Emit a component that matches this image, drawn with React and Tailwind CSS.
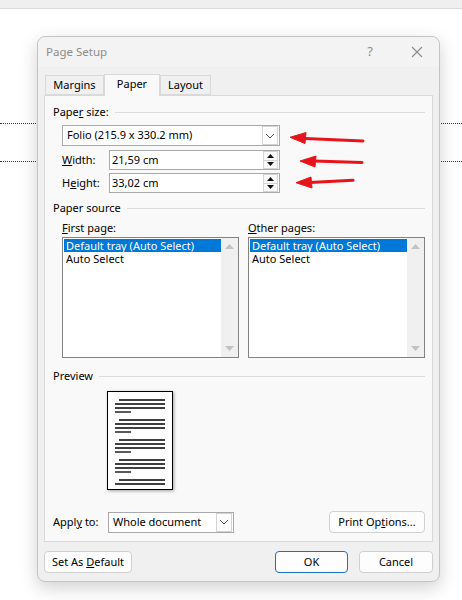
import React from 'react';

function SectionHeader({ children }) {
  return (
    <div className="flex h-[14px] items-center gap-[6px]">
      <span className="whitespace-nowrap">{children}</span>
      <div className="h-px flex-1 bg-[#dcdcdc]" />
    </div>
  );
}

function Chevron() {
  return (
    <svg width="10" height="6" viewBox="0 0 10 6">
      <path d="M1 1 L5 5 L9 1" fill="none" stroke="#555" strokeWidth="1" />
    </svg>
  );
}

function Dropdown({ value, width }) {
  return (
    <div className={`flex h-[21px] items-center border border-[#a9a9a9] bg-white ${width}`}>
      <span className="flex-1 truncate pl-[4px]">{value}</span>
      <div className="m-px flex h-[19px] w-[16px] items-center justify-center border border-[#d4d4d4] bg-white">
        <Chevron />
      </div>
    </div>
  );
}

function Spinner({ value }) {
  return (
    <div className="flex h-[20px] w-[171px] items-center border border-[#a9a9a9] bg-white">
      <span className="flex-1 pl-[2px]">{value}</span>
      <div className="mr-px flex h-[18px] w-[15px] flex-col border border-[#d4d4d4] bg-[#fafafa]">
        <div className="flex flex-1 items-center justify-center border-b border-[#d4d4d4]">
          <svg width="7" height="4" viewBox="0 0 7 4"><path d="M0 4 L3.5 0 L7 4 Z" fill="#111" /></svg>
        </div>
        <div className="flex flex-1 items-center justify-center">
          <svg width="7" height="4" viewBox="0 0 7 4"><path d="M0 0 L3.5 4 L7 0 Z" fill="#111" /></svg>
        </div>
      </div>
    </div>
  );
}

function ListBox({ width }) {
  return (
    <div className={`flex h-[121px] border border-[#828282] bg-white ${width}`}>
      <div className="flex-1 pt-px pl-px">
        <div className="h-[13px] bg-[#0078d7] pl-[2px] leading-[13px] text-white">Default tray (Auto Select)</div>
        <div className="h-[13px] pl-[2px] leading-[13px]">Auto Select</div>
      </div>
      <div className="flex w-[17px] flex-col items-center justify-between bg-[#f0f0f0] py-[6px]">
        <svg width="9" height="5" viewBox="0 0 9 5"><path d="M0 5 L4.5 0 L9 5 Z" fill="#c2c2c2" /></svg>
        <svg width="9" height="5" viewBox="0 0 9 5"><path d="M0 0 L4.5 5 L9 0 Z" fill="#c2c2c2" /></svg>
      </div>
    </div>
  );
}

function PagePreview() {
  const groups = [8, 28, 48, 68];
  return (
    <div className="h-[99px] w-[66px] border border-black bg-white shadow-[1px_1px_3px_rgba(0,0,0,0.35)]">
      <svg width="64" height="97" viewBox="0 0 64 97">
        {groups.map((y) => (
          <g key={y} stroke="#000" strokeWidth="1.3">
            <line x1="11" y1={y} x2="57" y2={y} />
            <line x1="7" y1={y + 4} x2="57" y2={y + 4} />
            <line x1="7" y1={y + 8} x2="57" y2={y + 8} />
            <line x1="7" y1={y + 12} x2="23" y2={y + 12} />
          </g>
        ))}
        <g stroke="#000" strokeWidth="1.3">
          <line x1="11" y1="88" x2="57" y2="88" />
          <line x1="7" y1="92" x2="57" y2="92" />
        </g>
      </svg>
    </div>
  );
}

function Button({ children, width, primary }) {
  return (
    <div
      className={`flex h-[22px] items-center justify-center rounded-[4px] border bg-[#fdfdfd] ${width} ${
        primary ? 'border-[#1c6fc1]' : 'border-[#d0d0d0]'
      }`}
    >
      {children}
    </div>
  );
}

function Tab({ children, active, width }) {
  return (
    <div
      className={`flex items-center justify-center border border-[#d9d9d9] ${width} ${
        active ? 'z-10 -mb-px h-[22px] border-b-0 bg-[#f9f9f9] pb-[2px]' : 'h-[20px] bg-[#f0f0f0] pt-px'
      }`}
    >
      {children}
    </div>
  );
}

export default function App() {
  return (
    <div className="relative h-[600px] w-[462px] overflow-hidden bg-white font-['Noto_Sans',sans-serif] text-[11px] text-black">
      <div className="h-[9px] border-b border-[#d9d9d9] bg-[#efefef]" />
      <div className="absolute top-[123px] right-0 left-0 border-t border-dotted border-[#333]" />
      <div className="absolute top-[161px] right-0 left-0 border-t border-dotted border-[#333]" />

      <div className="absolute top-[36px] left-[37px] h-[546px] w-[403px] rounded-[8px] border border-[#c4c4c4] bg-[#f0f0f0] shadow-[0_6px_18px_rgba(0,0,0,0.18)]">
        <div className="flex h-[30px] items-center rounded-t-[8px] bg-[#f3f3f3] pl-[8px] text-[#8c8c8c]">
          <span className="flex-1 text-[11.5px]">Page Setup</span>
          <span className="mr-[38px] text-[13px]">?</span>
          <svg className="mr-[16px]" width="12" height="12" viewBox="0 0 12 12">
            <path d="M1 1 L11 11 M11 1 L1 11" stroke="#8c8c8c" strokeWidth="1.1" />
          </svg>
        </div>

        <div className="mt-[7px] flex h-[21px] items-end pl-[7px]">
          <Tab width="w-[59px]">Margins</Tab>
          <Tab width="w-[56px]" active>Paper</Tab>
          <Tab width="w-[51px]">Layout</Tab>
        </div>

        <div className="mx-[6px] h-[447px] border border-[#d9d9d9] bg-[#f9f9f9] pt-[9px] pr-[7px] pl-[8px]">
          <SectionHeader>
            Pape<u>r</u> size:
          </SectionHeader>
          <div className="mt-[6px] ml-[9px]">
            <Dropdown value="Folio (215.9 x 330.2 mm)" width="w-[218px]" />
          </div>
          <div className="mt-[4px] ml-[9px] flex items-center">
            <span className="w-[47px]">
              <u>W</u>idth:
            </span>
            <Spinner value="21,59 cm" />
          </div>
          <div className="mt-[3px] ml-[9px] flex items-center">
            <span className="w-[47px]">
              H<u>e</u>ight:
            </span>
            <Spinner value="33,02 cm" />
          </div>

          <div className="mt-[8px]">
            <SectionHeader>Paper source</SectionHeader>
          </div>
          <div className="mt-[6px] ml-[9px] flex gap-[9px]">
            <div>
              <div className="h-[14px] leading-[14px]">
                <u>F</u>irst page:
              </div>
              <div className="mt-[2px]">
                <ListBox width="w-[177px]" />
              </div>
            </div>
            <div>
              <div className="h-[14px] leading-[14px]">
                <u>O</u>ther pages:
              </div>
              <div className="mt-[2px]">
                <ListBox width="w-[177px]" />
              </div>
            </div>
          </div>

          <div className="mt-[11px]">
            <SectionHeader>Preview</SectionHeader>
          </div>
          <div className="mt-[8px] ml-[54px]">
            <PagePreview />
          </div>

          <div className="mt-[21px] flex items-center">
            <span className="w-[55px]">
              Appl<u>y</u> to:
            </span>
            <Dropdown value="Whole document" width="w-[126px]" />
            <div className="ml-auto">
              <Button width="w-[96px]">
                <span>
                  Print Op<u>t</u>ions...
                </span>
              </Button>
            </div>
          </div>
        </div>

        <div className="mt-[9px] flex items-center px-[6px]">
          <Button width="w-[88px]">
            <span>
              Set As <u>D</u>efault
            </span>
          </Button>
          <div className="ml-auto flex gap-[11px]">
            <Button width="w-[73px]" primary>
              OK
            </Button>
            <Button width="w-[74px]">Cancel</Button>
          </div>
        </div>
      </div>

      <svg className="absolute top-[128px] left-[285px]" width="85" height="62" viewBox="0 0 85 62">
        <g fill="#e8141b" stroke="#e8141b">
          <path d="M20 10.5 L78 13" strokeWidth="3" strokeLinecap="round" />
          <path d="M5 9.3 L21 4.5 L20 15.5 Z" />
          <path d="M29 33 L77 34.5" strokeWidth="3" strokeLinecap="round" />
          <path d="M15 33 L31 28 L30 39 Z" />
          <path d="M25 54.5 L68 52.3" strokeWidth="3" strokeLinecap="round" />
          <path d="M11 54.7 L26 49 L27 60 Z" />
        </g>
      </svg>
    </div>
  );
}
